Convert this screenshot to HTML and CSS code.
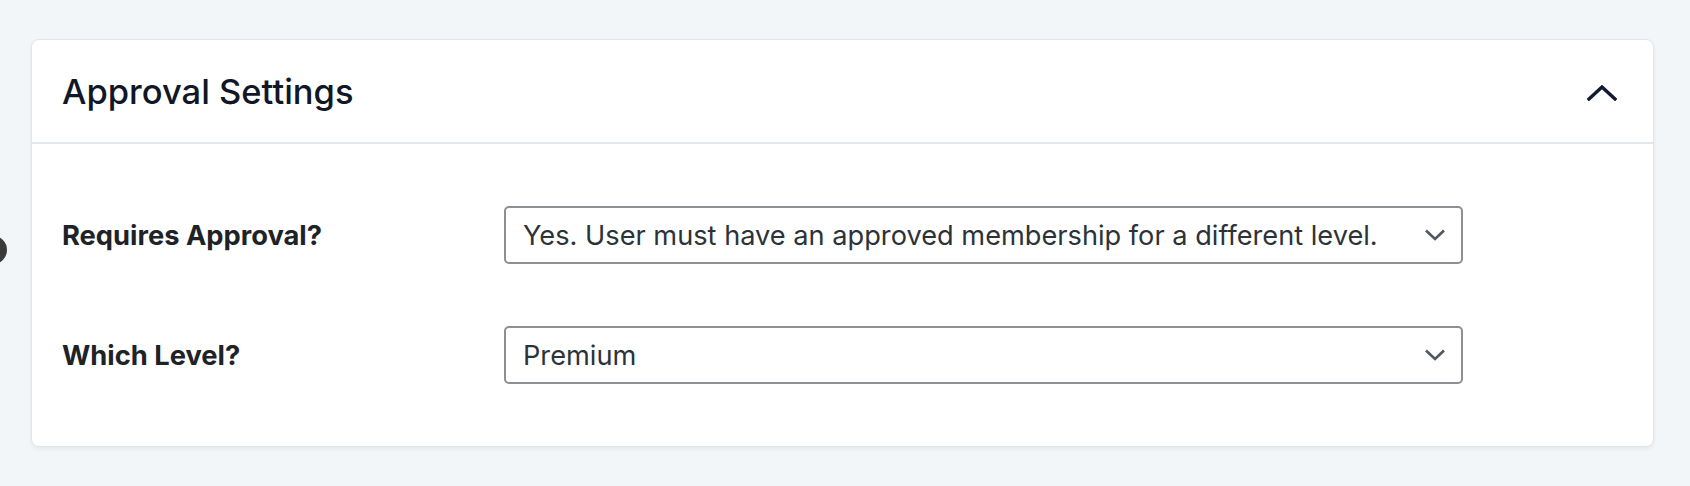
FILE: index.html
```html
<!DOCTYPE html>
<html lang="en">
<head>
<meta charset="utf-8">
<title>Approval Settings</title>
<link rel="stylesheet" href="styles.css">
</head>
<body>
<div class="edge-dot"></div>
<section class="card">
  <header class="card-header">
    <h2 class="card-title">Approval Settings</h2>
    <button class="toggle" type="button" aria-label="Collapse">
      <svg width="30" height="16" viewBox="0 0 30 16"><path d="M2 14 L15 2 L28 14" fill="none" stroke="#111a2e" stroke-width="3.4" stroke-linecap="square"/></svg>
    </button>
  </header>
  <div class="card-body">
    <div class="field-row">
      <label class="field-label">Requires Approval?</label>
      <div class="select">
        <span class="select-value">Yes. User must have an approved membership for a different level.</span>
        <svg class="select-arrow" width="22" height="14" viewBox="0 0 22 14"><path d="M2 2.5 L11 11 L20 2.5" fill="none" stroke="#50575e" stroke-width="2.6"/></svg>
      </div>
    </div>
    <div class="field-row">
      <label class="field-label">Which Level?</label>
      <div class="select">
        <span class="select-value">Premium</span>
        <svg class="select-arrow" width="22" height="14" viewBox="0 0 22 14"><path d="M2 2.5 L11 11 L20 2.5" fill="none" stroke="#50575e" stroke-width="2.6"/></svg>
      </div>
    </div>
  </div>
</section>
</body>
</html>
```

FILE: styles.css
```css
html, body {
  margin: 0;
  padding: 0;
}
body {
  background: #f3f6f9;
  font-family: Inter, "Noto Sans", "Liberation Sans", sans-serif;
  padding: 39px 36px 38px 31px;
  position: relative;
  min-height: 486px;
  box-sizing: border-box;
}
.edge-dot {
  position: absolute;
  left: -21px;
  top: 236px;
  width: 28px;
  height: 28px;
  border-radius: 50%;
  background: #3a3a3a;
}
.card {
  background: #fff;
  border: 1px solid #e1e5eb;
  border-radius: 8px;
  box-shadow: 0 2px 4px rgba(16, 24, 40, 0.06);
  height: 408px;
  box-sizing: border-box;
  display: flex;
  flex-direction: column;
}
.card-header {
  height: 104px;
  border-bottom: 2px solid #e4e7ec;
  box-sizing: border-box;
  display: flex;
  align-items: center;
  justify-content: space-between;
  padding: 0 36px 0 30px;
}
.card-title {
  margin: 0;
  font-size: 34.5px;
  font-weight: 500;
  color: #101828;
  letter-spacing: 0;
}
.toggle {
  border: 0;
  background: none;
  padding: 0;
  display: flex;
  margin-top: 4px;
}
.card-body {
  padding: 62px 30px 0 30px;
  display: flex;
  flex-direction: column;
  gap: 62px;
}
.field-row {
  display: flex;
  align-items: center;
}
.field-label {
  width: 442px;
  flex: none;
  font-size: 27.3px;
  font-weight: 700;
  color: #1d2327;
}
.select {
  width: 959px;
  height: 58px;
  box-sizing: border-box;
  border: 2px solid #8c8f94;
  border-radius: 5px;
  display: flex;
  align-items: center;
  justify-content: space-between;
  padding: 0 15px 0 17px;
}
.select-value {
  font-size: 27.2px;
  color: #2c3338;
}
.select-arrow {
  flex: none;
}
```
